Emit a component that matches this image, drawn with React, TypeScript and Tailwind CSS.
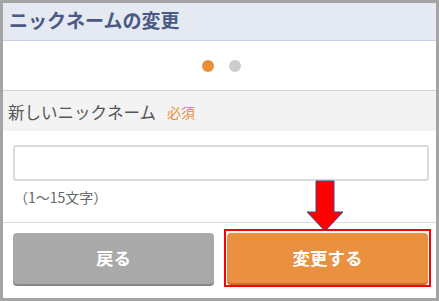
export default function App() {
  return (
    <div
      className="relative w-[439px] h-[301px] border-[3px] border-[#a4a4a4] bg-white flex flex-col overflow-hidden"
      style={{ fontFamily: '"Noto Sans CJK JP", "Noto Sans", sans-serif' }}
    >
      {/* Header */}
      <div className="h-[38px] shrink-0 bg-[#e5e9f2] border-b border-[#c5d1df] flex items-center pl-[6px] pb-[4px]">
        <h1 className="text-[19px] font-bold text-[#4a5a84] leading-none">ニックネームの変更</h1>
      </div>

      {/* Step dots */}
      <div className="h-[50px] shrink-0 border-b border-[#d4d4d4] flex items-center justify-center gap-[15px] pl-[3px]">
        <span className="w-[12px] h-[12px] rounded-full bg-[#ea8f38]" />
        <span className="w-[12px] h-[12px] rounded-full bg-[#cccccc]" />
      </div>

      {/* Label */}
      <div className="h-[40px] shrink-0 bg-[#f3f3f3] flex items-center pl-[5px] pt-[2px] gap-[11px]">
        <span className="text-[16.5px] text-[#555555] leading-none">新しいニックネーム</span>
        <span className="text-[14px] text-[#e8903a] leading-none">必須</span>
      </div>

      {/* Input */}
      <div className="pl-[10px] pr-[7px] pt-[14px] shrink-0">
        <div className="h-[36px] rounded-[3px] border-2 border-[#d9d9d9] bg-white" />
        <p className="mt-[7px] pl-[1px] text-[14px] text-[#666666] leading-[19px]">（1〜15文字）</p>
      </div>

      <div className="mt-[15px] h-px bg-[#dcdcdc] shrink-0" />

      {/* Buttons */}
      <div className="flex-1 flex items-center pl-[10px] gap-[10px] pb-[5px]">
        <button className="w-[201px] h-[51px] rounded-[4px] bg-[#a9a9a9] shadow-[0_2px_0_#858585] text-white text-[17.5px] font-bold">
          戻る
        </button>
        <div className="border-2 border-[#ff0000] pl-px pr-px pt-[2px] pb-[2px]">
          <button className="w-[201px] h-[50px] rounded-[4px] bg-[#ea9140] shadow-[0_2px_0_#c0732f] text-white text-[17.5px] font-bold">
            変更する
          </button>
        </div>
      </div>

      {/* Annotation arrow */}
      <svg className="absolute left-[303px] top-[177px]" width="38" height="52" viewBox="0 0 38 52">
        <polygon
          points="10,1 28,1 28,32 37,32 19,51 1,32 10,32"
          fill="#ff0000"
          stroke="#3b4a8c"
          strokeWidth="1"
        />
      </svg>
    </div>
  );
}
